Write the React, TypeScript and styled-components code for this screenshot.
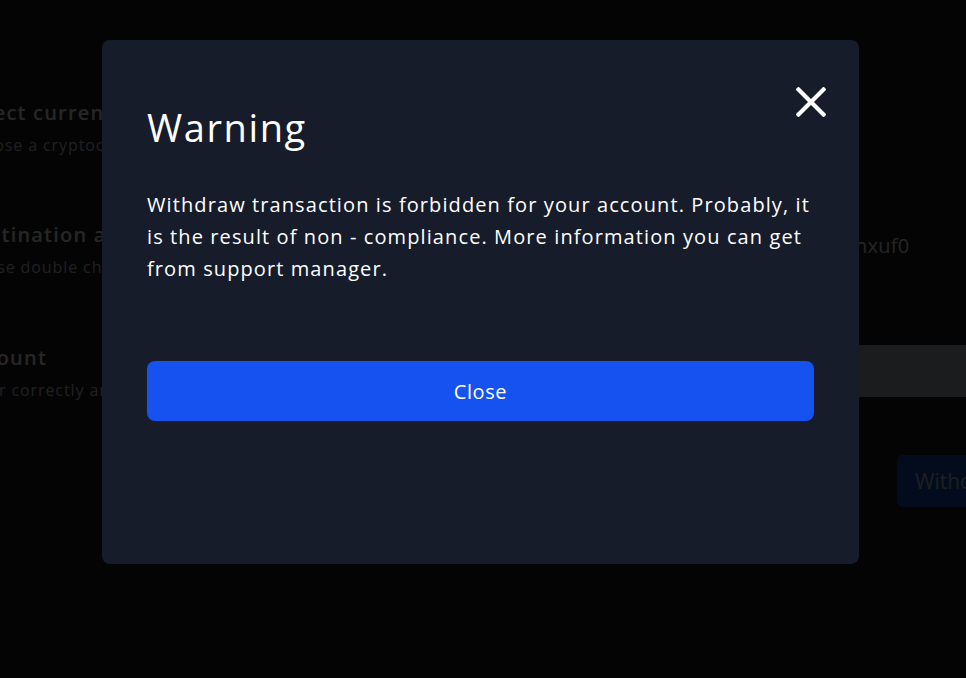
import React from "react";
import styled, { createGlobalStyle } from "styled-components";

const Global = createGlobalStyle`
  html, body { margin: 0; padding: 0; background: #1b1b1f; overflow: hidden; }
  body { font-family: "Open Sans", "Noto Sans", sans-serif; }
  * { box-sizing: border-box; }
`;

const Page = styled.main`
  width: 966px;
  height: 678px;
  overflow: hidden;
  background: #1b1b1f;
  padding-top: 100px;
`;

const Form = styled.div`
  display: flex;
  flex-direction: column;
  margin-left: -38px;
  width: 1095px;
`;

const Row = styled.div<{ $h: number }>`
  display: grid;
  grid-template-columns: 565px 530px;
  height: ${(p) => p.$h}px;
  align-items: start;
`;

const Label = styled.div`
  display: flex;
  flex-direction: column;
  gap: 8px;
`;

const LabelTitle = styled.div`
  font-size: 20px;
  line-height: 26px;
  font-weight: 600;
  letter-spacing: 1.2px;
  color: #ffffff;
`;

const LabelHint = styled.div`
  font-size: 16px;
  line-height: 22px;
  letter-spacing: 0.9px;
  color: #d4d8e0;
`;

const Address = styled.div`
  margin-top: 10px;
  font-size: 20px;
  line-height: 28px;
  letter-spacing: 0.25px;
  color: #f4f4f6;
`;

const Input = styled.div`
  height: 52px;
  background: #b6b9c2;
  border-radius: 4px;
`;

const Submit = styled.button`
  grid-column: 2;
  justify-self: end;
  width: 160px;
  height: 52px;
  border: none;
  border-radius: 6px;
  background: #0e55b8;
  color: #c4cde0;
  font-family: inherit;
  font-size: 21px;
  text-align: left;
  padding-left: 18px;
`;

const Backdrop = styled.div`
  position: fixed;
  inset: 0;
  background: rgba(0, 0, 0, 0.85);
  display: flex;
  align-items: flex-start;
  padding: 40px 0 0 102px;
`;

const Modal = styled.section`
  position: relative;
  width: 757px;
  height: 524px;
  background: #171c2a;
  border-radius: 8px;
  padding: 65px 45px 0;
  display: flex;
  flex-direction: column;
`;

const Title = styled.h2`
  margin: 0;
  font-size: 38px;
  line-height: 44px;
  font-weight: 500;
  letter-spacing: 1.6px;
  color: #ffffff;
`;

const Text = styled.p`
  margin: 40px 0 0;
  font-size: 20px;
  line-height: 32px;
  letter-spacing: 1.1px;
  color: #ffffff;
`;

const CloseButton = styled.button`
  margin-top: 76px;
  height: 60px;
  width: 100%;
  border: none;
  border-radius: 8px;
  background: #1652f0;
  color: #ffffff;
  font-family: inherit;
  font-size: 20px;
  letter-spacing: 0.6px;
`;

const CloseIcon = styled.button`
  position: absolute;
  top: 42px;
  right: 28px;
  width: 40px;
  height: 40px;
  padding: 0;
  border: none;
  background: transparent;
  display: flex;
  align-items: center;
  justify-content: center;
`;

export default function App() {
  return (
    <>
      <Global />
      <Page>
        <Form>
          <Row $h={122}>
            <Label>
              <LabelTitle>Select currency</LabelTitle>
              <LabelHint>Choose a cryptocurrency to withdraw</LabelHint>
            </Label>
          </Row>
          <Row $h={123}>
            <Label>
              <LabelTitle>Destination address</LabelTitle>
              <LabelHint>Please double check the address</LabelHint>
            </Label>
            <Address>bc1q9h6tq8mz4w7n2k5jxv3r0pdl8nxuf0</Address>
          </Row>
          <Row $h={110}>
            <Label>
              <LabelTitle>Amount</LabelTitle>
              <LabelHint>Enter correctly amount</LabelHint>
            </Label>
            <Input />
          </Row>
          <Row $h={52}>
            <Submit type="button">Withdraw</Submit>
          </Row>
        </Form>
      </Page>
      <Backdrop>
        <Modal role="dialog" aria-labelledby="warning-title">
          <CloseIcon type="button" aria-label="Close">
            <svg width="30" height="30" viewBox="0 0 30 30">
              <path d="M1 1 L29 29 M29 1 L1 29" stroke="#ffffff" strokeWidth="4.2" />
            </svg>
          </CloseIcon>
          <Title id="warning-title">Warning</Title>
          <Text>
            Withdraw transaction is forbidden for your account. Probably, it is the result of non - compliance. More information you can get from support manager.
          </Text>
          <CloseButton type="button">Close</CloseButton>
        </Modal>
      </Backdrop>
    </>
  );
}
